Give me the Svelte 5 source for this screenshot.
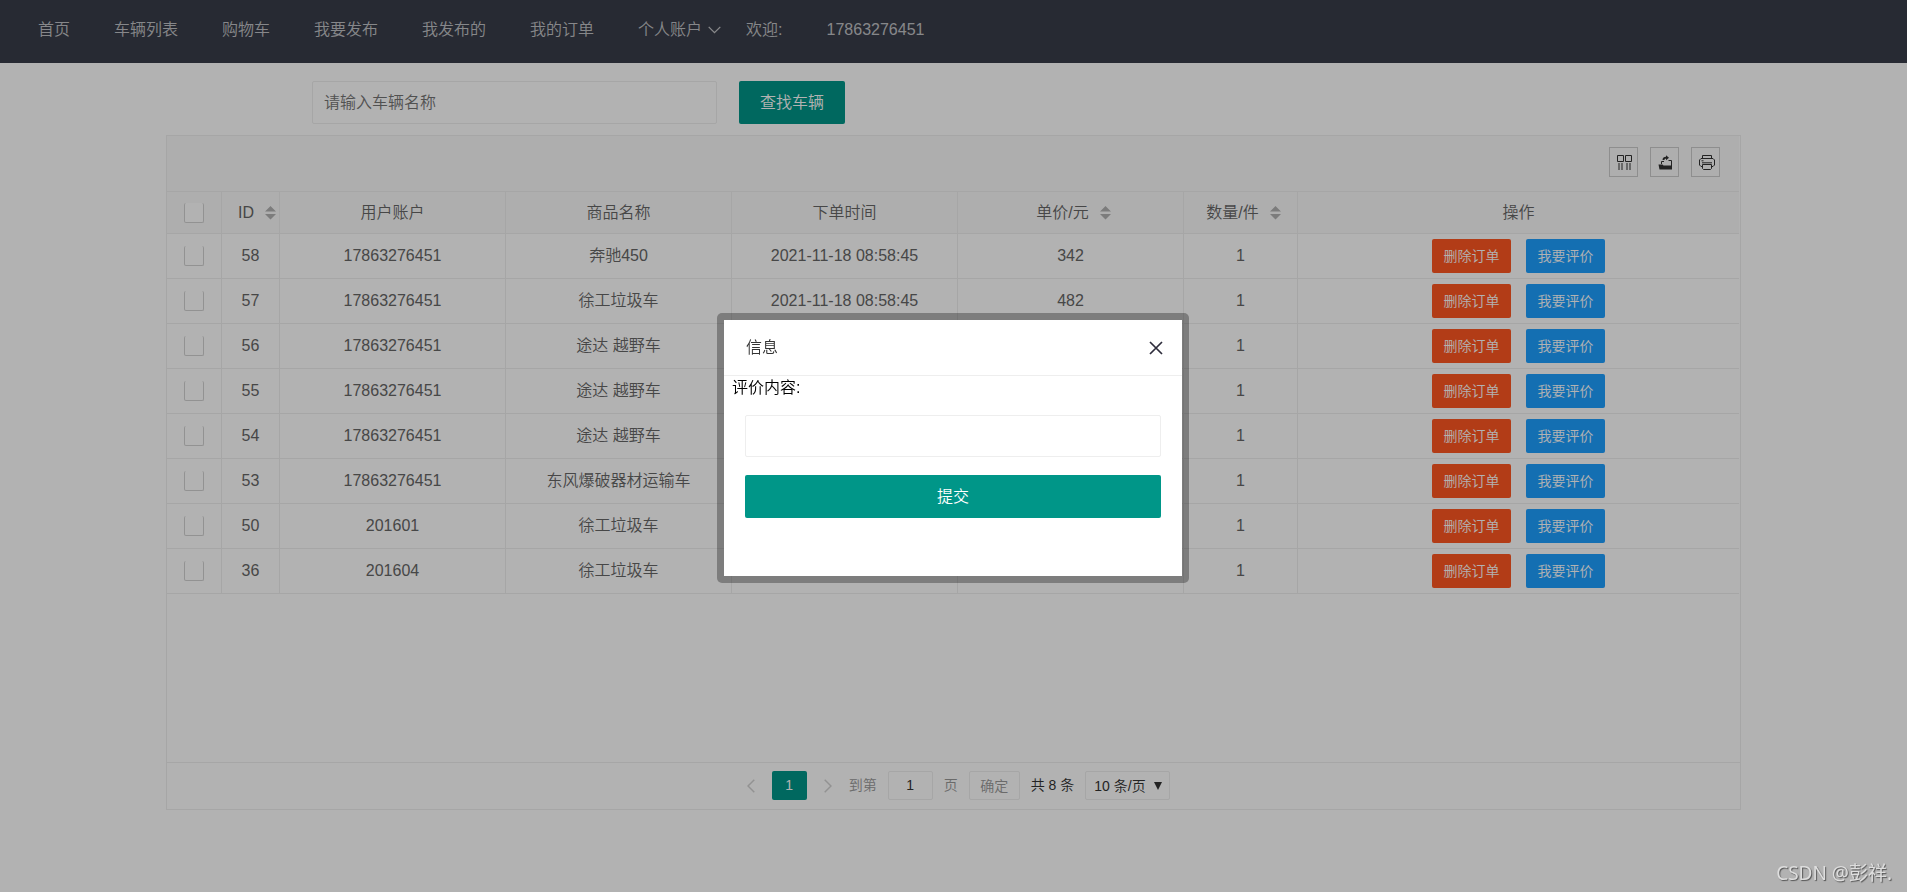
<script>
  const navItems = ['首页', '车辆列表', '购物车', '我要发布', '我发布的', '我的订单'];

  const orders = [
    { id: 58, account: '17863276451', product: '奔驰450', time: '2021-11-18 08:58:45', price: 342, count: 1 },
    { id: 57, account: '17863276451', product: '徐工垃圾车', time: '2021-11-18 08:58:45', price: 482, count: 1 },
    { id: 56, account: '17863276451', product: '途达 越野车', time: '', price: '', count: 1 },
    { id: 55, account: '17863276451', product: '途达 越野车', time: '', price: '', count: 1 },
    { id: 54, account: '17863276451', product: '途达 越野车', time: '', price: '', count: 1 },
    { id: 53, account: '17863276451', product: '东风爆破器材运输车', time: '', price: '', count: 1 },
    { id: 50, account: '201601', product: '徐工垃圾车', time: '', price: '', count: 1 },
    { id: 36, account: '201604', product: '徐工垃圾车', time: '', price: '', count: 1 }
  ];

  let keyword = $state('');
  let page = $state('1');
  let comment = $state('');
  let dialogOpen = $state(true);
</script>

{#snippet sortIcon()}
  <svg class="sort" viewBox="0 0 11 14" aria-hidden="true">
    <path d="M5.5 0 11 5.5H0zM0 8h11L5.5 13.5z" fill="#b2b2b2" />
  </svg>
{/snippet}

<header>
  <nav>
    {#each navItems as item}
      <a href="#top">{item}</a>
    {/each}
    <a class="account" href="#top">个人账户<svg viewBox="0 0 13 8" aria-hidden="true"><path d="M.7.9 6.5 6.7 12.300.9" /></svg></a>
    <span>欢迎:</span>
    <a href="#top">17863276451</a>
  </nav>
</header>

<main>
  <form class="search" onsubmit={(e) => e.preventDefault()}>
    <input type="text" aria-label="车辆名称" placeholder="请输入车辆名称" bind:value={keyword} />
    <button type="submit">查找车辆</button>
  </form>

  <section class="panel">
    <div class="toolbar">
      <button type="button" aria-label="筛选列">
        <svg viewBox="0 0 16 16">
          <path d="M.5 1.500h6v6h-6zM8.500 1.500h6v6h-6zM2 9v7M5 9v7M10 9v7M13 9v7" />
        </svg>
      </button>
      <button type="button" aria-label="导出">
        <svg viewBox="0 0 16 16">
          <path d="M3.500 10V7.500H6M10.500 6.500h3v8" />
          <path d="M.5 10.500h4l1 1H14V15.500H1.500zM4.500 6C4.500 3.700 6 2.700 8 2.700V1.200l3 2.600-3 2.400V4.700C6.800 4.700 6.500 5.200 6.500 6z" fill="#333" stroke="none" />
        </svg>
      </button>
      <button type="button" aria-label="打印">
        <svg viewBox="0 0 16 16">
          <path d="M3.500 4.500V1.500h9v3M3.500 12.500h-1.500l-1.500-1.500V6L2 4.500h12l1.500 1.500V11L14 12.500h-1.500M2.500 6.800h2M3 8.800h10" />
          <path d="M3.500 10.500h9v4l-1 1h-7l-1-1z" />
        </svg>
      </button>
    </div>

    <div class="table-area">
      <table>
        <colgroup>
          <col class="c-check" /><col class="c-id" /><col class="c-text" /><col class="c-text" />
          <col class="c-text" /><col class="c-text" /><col class="c-count" /><col />
        </colgroup>
        <thead>
          <tr>
            <th><input type="checkbox" aria-label="全选" /></th>
            <th>ID{@render sortIcon()}</th>
            <th>用户账户</th>
            <th>商品名称</th>
            <th>下单时间</th>
            <th>单价/元{@render sortIcon()}</th>
            <th>数量/件{@render sortIcon()}</th>
            <th>操作</th>
          </tr>
        </thead>
        <tbody>
          {#each orders as order (order.id)}
            <tr>
              <td><input type="checkbox" aria-label={`选择订单 ${order.id}`} /></td>
              <td>{order.id}</td>
              <td>{order.account}</td>
              <td>{order.product}</td>
              <td>{order.time}</td>
              <td>{order.price}</td>
              <td>{order.count}</td>
              <td>
                <div class="actions">
                  <button class="delete" type="button">删除订单</button>
                  <button class="review" type="button" onclick={() => (dialogOpen = true)}>我要评价</button>
                </div>
              </td>
            </tr>
          {/each}
        </tbody>
      </table>
    </div>

    <footer>
      <button class="arrow" type="button" aria-label="上一页"><svg viewBox="0 0 8 14"><path d="M7.300.7 1 7l6.300 6.300" /></svg></button>
      <button class="current" type="button">1</button>
      <button class="arrow" type="button" aria-label="下一页"><svg viewBox="0 0 8 14"><path d="M.7.7 7 7 .7 13.300" /></svg></button>
      <label class="skip">到第 <input type="text" bind:value={page} /> 页</label>
      <button class="confirm" type="button">确定</button>
      <span class="total">共 8 条</span>
      <div class="limit">
        <select aria-label="每页条数"><option>10 条/页</option></select>
        <svg viewBox="0 0 8 8" aria-hidden="true"><path d="M0 0h8L4 8z" /></svg>
      </div>
    </footer>
  </section>
</main>

{#if dialogOpen}
  <div class="shade">
    <div class="dialog" role="dialog" aria-modal="true" aria-labelledby="dialog-title">
      <div class="title">
        <h2 id="dialog-title">信息</h2>
        <button type="button" aria-label="关闭" onclick={() => (dialogOpen = false)}>
          <svg viewBox="0 0 14 14"><path d="M1 1l12 12M13 1L1 13" /></svg>
        </button>
      </div>
      <form onsubmit={(e) => e.preventDefault()}>
        <label for="comment">评价内容:</label>
        <input id="comment" type="text" bind:value={comment} />
        <button type="submit">提交</button>
      </form>
    </div>
  </div>
{/if}

<div class="watermark">CSDN @彭祥.</div>

<style>
  :global(body) {
    margin: 0;
    background: #fff;
    color: #333;
    font: 350 16px/24px 'Liberation Sans', 'Noto Sans CJK SC', sans-serif;
  }

  :global(*) {
    box-sizing: border-box;
  }

  button,
  input,
  select {
    margin: 0;
    padding: 0;
    border: 0;
    border-radius: 2px;
    background: none;
    color: inherit;
    font: inherit;
  }

  svg {
    display: block;
    fill: none;
    stroke: currentColor;
  }

  header {
    height: 63px;
    padding-left: 16px;
    background: #393d49;
    color: rgba(255, 255, 255, 0.7);
  }

  nav {
    display: flex;
    line-height: 60px;
    white-space: nowrap;
  }

  nav a,
  nav span {
    padding: 0 22px;
    color: inherit;
    text-decoration: none;
  }

  nav .account {
    display: flex;
    align-items: center;
    gap: 6px;
    padding-right: 3px;
  }

  .account svg {
    width: 13px;
    height: 8px;
    stroke-width: 1.3;
  }

  main {
    padding: 18px 166px 0;
  }

  .search {
    display: flex;
    gap: 22px;
    padding-left: 146px;
  }

  .search input {
    width: 405px;
    height: 43px;
    padding: 0 11px;
    border: 1px solid #eee;
  }

  .search input::placeholder {
    color: #757575;
    opacity: 1;
  }

  .search button {
    height: 43px;
    padding: 0 21px;
    background: #009688;
    color: #fff;
  }

  .panel {
    margin-top: 11px;
    border: 1px solid #eee;
  }

  .toolbar {
    display: flex;
    justify-content: flex-end;
    gap: 12px;
    height: 56px;
    margin-right: 1px;
    padding: 11px 19px 0 0;
    border-bottom: 1px solid #eee;
    background: #fafafa;
  }

  .toolbar button {
    display: grid;
    place-items: center;
    width: 29px;
    height: 30px;
    border: 1px solid #ccc;
    border-radius: 0;
    padding-left: 3px;
  }

  .toolbar svg {
    width: 16px;
    height: 16px;
  }

  .table-area {
    min-height: 570px;
    margin-right: 1px;
  }

  table {
    width: 100%;
    border-spacing: 0;
    table-layout: fixed;
    color: #666;
  }

  .c-check {
    width: 55px;
  }

  .c-id {
    width: 58px;
  }

  .c-text {
    width: 226px;
  }

  .c-count {
    width: 114px;
  }

  th,
  td {
    height: 45px;
    padding: 0 16px;
    border: solid #eee;
    border-width: 0 1px 1px 0;
    font-weight: inherit;
    text-align: center;
    white-space: nowrap;
  }

  th {
    height: 42px;
    background: #fafafa;
  }

  th:last-child,
  td:last-child {
    border-right: 0;
  }

  td:first-child,
  th:first-child {
    padding: 0 17px;
  }

  input[type='checkbox'] {
    display: block;
    width: 20px;
    height: 20px;
    border: 1px solid #d2d2d2;
    border-top: 0;
    background: #fff;
    appearance: none;
  }

  .sort {
    display: inline-block;
    width: 11px;
    height: 14px;
    margin: 0 -6px 0 11px;
    stroke: none;
    vertical-align: -2px;
  }

  .actions {
    display: flex;
    justify-content: center;
    gap: 15px;
  }

  .actions button {
    width: 79px;
    height: 34px;
    color: #fff;
    font-size: 14px;
  }

  .actions .delete {
    background: #ff5722;
  }

  .actions .review {
    background: #1e9fff;
  }

  footer {
    display: flex;
    align-items: flex-start;
    justify-content: center;
    gap: 11px;
    height: 47px;
    padding: 8px 0 0 4px;
    border-top: 1px solid #eee;
    font-size: 14px;
    line-height: 29px;
  }

  footer button,
  footer input,
  footer select {
    height: 29px;
  }

  .arrow {
    display: grid;
    place-items: center;
    width: 20px;
    color: #d2d2d2;
  }

  .arrow svg {
    width: 8px;
    height: 14px;
    stroke-width: 1.5;
  }

  .current {
    width: 35px;
    background: #009688;
    color: #fff;
  }

  .skip {
    display: flex;
    gap: 11px;
    color: #999;
  }

  .skip input {
    width: 45px;
    border: 1px solid #eee;
    color: #333;
    text-align: center;
  }

  .confirm {
    width: 51px;
    border: 1px solid #eee;
    color: #999;
  }

  .limit {
    display: grid;
    align-items: center;
    justify-items: end;
  }

  .limit select,
  .limit svg {
    grid-area: 1 / 1;
  }

  .limit select {
    width: 85px;
    padding-left: 8px;
    border: 1px solid #eee;
    appearance: none;
  }

  .limit svg {
    width: 8px;
    height: 8px;
    margin-right: 8px;
    fill: #333;
    stroke: none;
    pointer-events: none;
  }

  .shade {
    position: fixed;
    inset: 0;
    display: grid;
    place-items: center;
    padding: 4px 1px 0 0;
    background: rgba(0, 0, 0, 0.3);
  }

  .dialog {
    width: 472px;
    height: 270px;
    border: 7px solid rgba(0, 0, 0, 0.3);
    border-radius: 5px;
    background: #fff padding-box;
  }

  .title {
    display: flex;
    align-items: center;
    justify-content: space-between;
    height: 56px;
    padding: 0 19px 0 22px;
    border-bottom: 1px solid #eee;
  }

  .title h2 {
    margin: 0;
    font-size: 16px;
    font-weight: inherit;
  }

  .title svg {
    width: 14px;
    height: 14px;
    color: #2e2d3c;
    stroke-width: 1.7;
  }

  .dialog form {
    display: flex;
    flex-direction: column;
    padding: 0 21px;
    color: #000;
  }

  .dialog label {
    margin-left: -13px;
  }

  .dialog form input {
    height: 42px;
    margin: 15px 0 18px;
    padding: 0 11px;
    border: 1px solid #eee;
  }

  .dialog form button {
    height: 43px;
    background: #009688;
    color: #fff;
  }

  .watermark {
    position: fixed;
    right: 15px;
    bottom: 6px;
    color: #dedede;
    font: 19px/26px 'Noto Sans', 'Noto Sans CJK SC', sans-serif;
    text-shadow: 1px 1px 1px #555;
  }
</style>
